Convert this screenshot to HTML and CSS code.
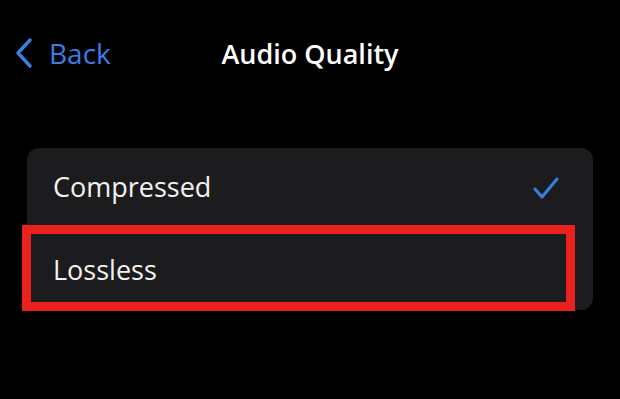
FILE: index.html
```html
<!DOCTYPE html>
<html lang="en">
<head>
  <meta charset="UTF-8">
  <title>Audio Quality</title>
  <link rel="stylesheet" href="styles.css">
</head>
<body>
  <div class="nav-bar">
    <div class="back">
      <svg class="chevron" width="18" height="30" viewBox="0 0 18 30">
        <path d="M15 2 L3 15 L15 28" fill="none" stroke="#3a7ee0" stroke-width="3.4" stroke-linecap="round" stroke-linejoin="round"/>
      </svg>
      <span>Back</span>
    </div>
    <div class="title">Audio Quality</div>
    <div></div>
  </div>

  <div class="card">
    <div class="row">
      <span>Compressed</span>
      <svg class="check" width="28" height="26" viewBox="0 0 28 26">
        <path d="M3 14 L10 22 L25 4" fill="none" stroke="#3a7ee0" stroke-width="3" stroke-linecap="round" stroke-linejoin="round"/>
      </svg>
    </div>
    <div class="row">
      <span>Lossless</span>
    </div>
    <!-- highlight box drawn over the screenshot -->
    <div class="highlight"></div>
  </div>
</body>
</html>
```

FILE: styles.css
```css
body {
  margin: 0;
  background-color: #000;
  font-family: "Open Sans", "Liberation Sans", sans-serif;
  color: #f2f2f2;
  height: 399px;
  overflow: hidden;
}

.nav-bar {
  display: grid;
  grid-template-columns: 1fr auto 1fr;
  align-items: center;
  height: 40px;
  padding-top: 33px;
}

.back {
  display: flex;
  align-items: center;
  gap: 16px;
  padding-left: 15px;
  color: #3a7ee0;
  font-size: 28px;
}

.title {
  font-size: 27px;
  font-weight: 600;
  color: #fff;
}

.card {
  position: relative;
  margin: 75px 27px 0 27px;
  background-color: #1c1c1e;
  border-radius: 12px;
}

.row {
  display: flex;
  align-items: center;
  justify-content: space-between;
  height: 81px;
  padding: 0 33px 0 26px;
  font-size: 27px;
}

.row:first-child {
  padding-bottom: 4px;
  height: 77px;
}

.check {
  margin-top: 2px;
}

.highlight {
  position: absolute;
  left: -5px;
  top: 77px;
  width: 535px;
  height: 68px;
  border: 9px solid #e8201e;
}
```
